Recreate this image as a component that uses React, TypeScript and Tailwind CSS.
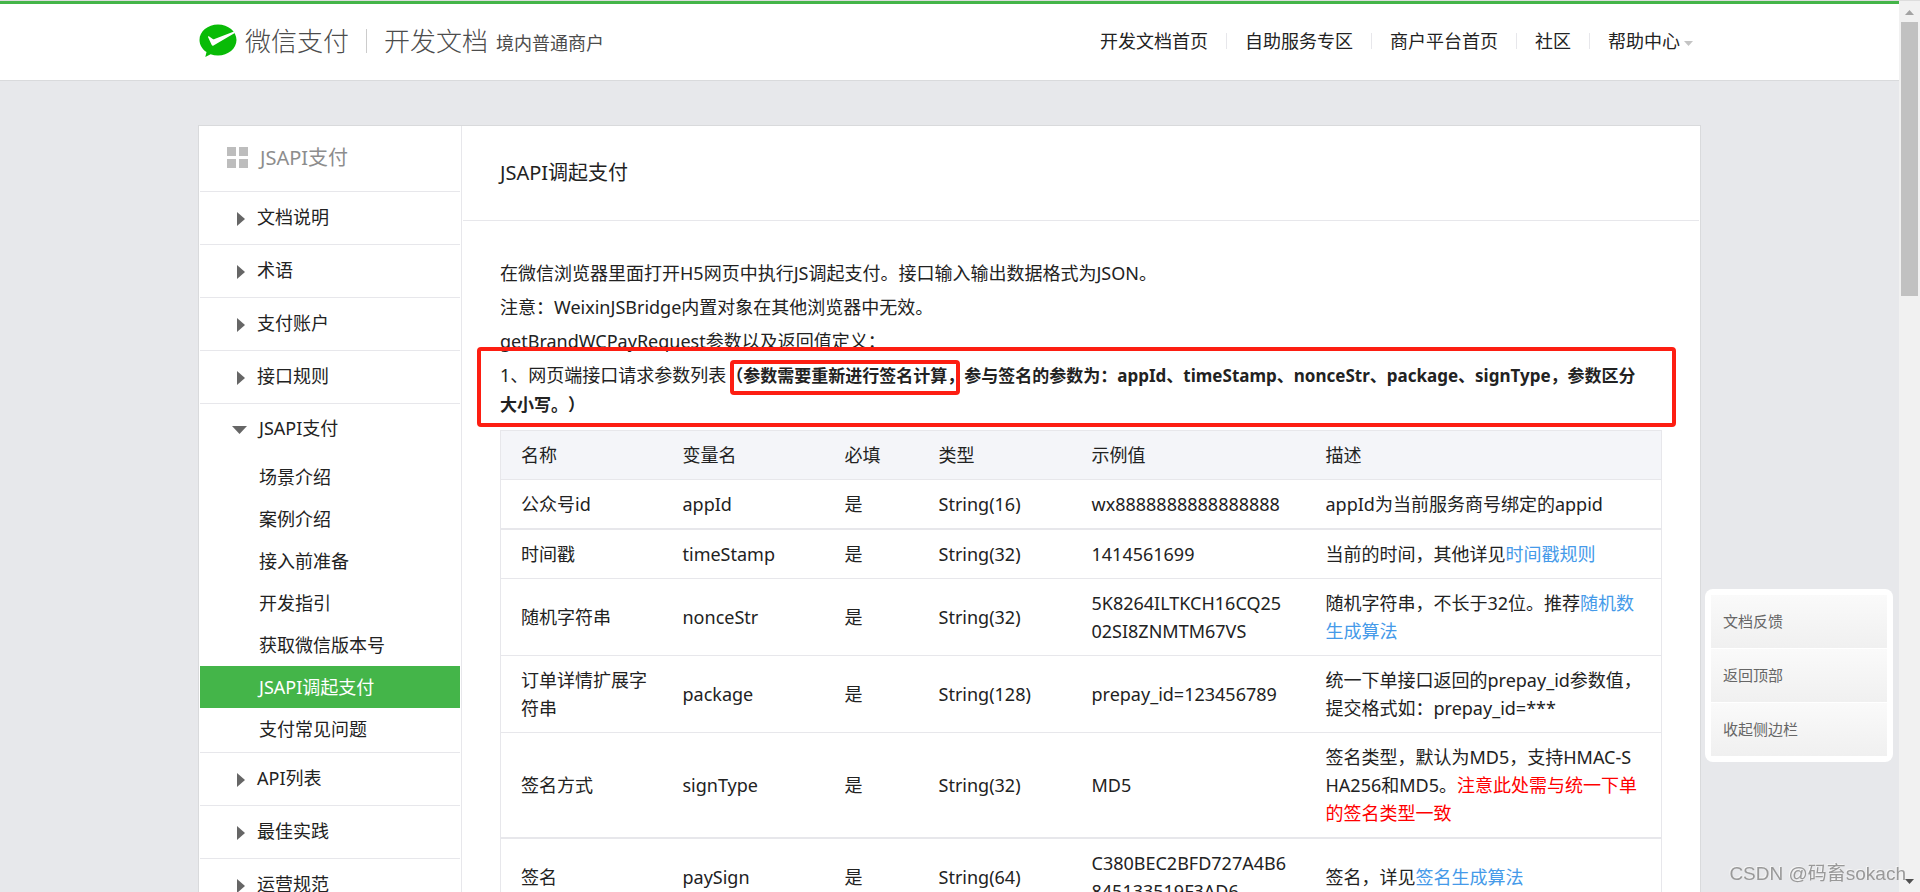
import type { ReactNode } from "react";
import clsx from "clsx";

const NAV = ["开发文档首页", "自助服务专区", "商户平台首页", "社区"];

const CHILDREN = [
  "场景介绍",
  "案例介绍",
  "接入前准备",
  "开发指引",
  "获取微信版本号",
  "JSAPI调起支付",
  "支付常见问题",
];

const ACTIVE = "JSAPI调起支付";

type Param = {
  label: string;
  name: string;
  type: string;
  example: string;
  desc: ReactNode;
  thick?: boolean;
};

const PARAMS: Param[] = [
  {
    label: "公众号id",
    name: "appId",
    type: "String(16)",
    example: "wx8888888888888888",
    desc: "appId为当前服务商号绑定的appid",
    thick: true,
  },
  {
    label: "时间戳",
    name: "timeStamp",
    type: "String(32)",
    example: "1414561699",
    desc: (
      <>
        当前的时间，其他详见<DocLink>时间戳规则</DocLink>
      </>
    ),
  },
  {
    label: "随机字符串",
    name: "nonceStr",
    type: "String(32)",
    example: "5K8264ILTKCH16CQ2502SI8ZNMTM67VS",
    desc: (
      <>
        随机字符串，不长于32位。推荐<DocLink>随机数生成算法</DocLink>
      </>
    ),
  },
  {
    label: "订单详情扩展字符串",
    name: "package",
    type: "String(128)",
    example: "prepay_id=123456789",
    desc: "统一下单接口返回的prepay_id参数值，提交格式如：prepay_id=***",
  },
  {
    label: "签名方式",
    name: "signType",
    type: "String(32)",
    example: "MD5",
    desc: (
      <>
        签名类型，默认为MD5，支持HMAC-SHA256和MD5。
        <span className="text-[#ff0000]">注意此处需与统一下单的签名类型一致</span>
      </>
    ),
    thick: true,
  },
  {
    label: "签名",
    name: "paySign",
    type: "String(64)",
    example: "C380BEC2BFD727A4B6845133519F3AD6",
    desc: (
      <>
        签名，详见<DocLink>签名生成算法</DocLink>
      </>
    ),
  },
];

function DocLink({ children }: { children: ReactNode }) {
  return (
    <a href="#" className="text-[#459ae9]">
      {children}
    </a>
  );
}

function Logo() {
  return (
    <svg width="38" height="34" viewBox="0 0 38 34" aria-hidden="true">
      <path
        d="M19 0.5C8.8 0.5 0.5 7.4 0.5 16c0 5 2.8 9.3 7 12.1L6.3 33l5.3-2.7c2.3 0.8 4.8 1.2 7.4 1.2 10.2 0 18.5-7 18.5-15.5S29.2 0.5 19 0.5Z"
        fill="#09bb07"
      />
      <path
        d="M14.5 21.5c-0.8 0.4-1.5 0.1-1.9-0.7L9 13c-0.2-0.6 0.3-1 0.9-0.7l3.9 2.7c0.5 0.3 1.1 0.4 1.7 0.1L35 7.6l0.8 1.5Z"
        fill="#fff"
      />
    </svg>
  );
}

function Header() {
  return (
    <header className="border-t border-b border-t-[#dddddd] border-b-[#d9dadc] bg-white">
      <div className="border-t-3 border-[#44b549]">
        <div className="mx-auto flex h-[76px] max-w-[1503px] items-center justify-between pr-2 pb-0.5 pl-px">
          <a href="#" className="flex items-center whitespace-nowrap text-[#4c4c4c]">
            <Logo />
            <span className="ml-2 text-[26px] font-light">微信支付</span>
            <span className="mx-[17px] h-6 w-px bg-[#cccccc]" />
            <span className="text-[26px] font-light">开发文档</span>
            <span className="mt-1 ml-2 text-lg">境内普通商户</span>
          </a>
          <nav className="flex items-center text-lg">
            {NAV.map((item) => (
              <div key={item} className="flex items-center">
                <a href="#">{item}</a>
                <span className="mx-[18px] h-4 w-px bg-[#e7e7eb]" />
              </div>
            ))}
            <a href="#" className="flex items-center gap-1">
              帮助中心
              <svg className="mt-1" width="9" height="5" viewBox="0 0 9 5" aria-hidden="true">
                <path d="M0 0h9L4.5 5Z" fill="#c4c4c4" />
              </svg>
            </a>
          </nav>
        </div>
      </div>
    </header>
  );
}

function MenuItem({ children }: { children: ReactNode }) {
  return (
    <button className="flex h-[53px] w-full items-center border-b border-[#e7e7eb] pb-0.5 pl-[37px] text-left">
      <svg className="mt-1" width="8" height="14" viewBox="0 0 8 14" aria-hidden="true">
        <path d="M0 0l8 7-8 7Z" fill="#666" />
      </svg>
      <span className="ml-3">{children}</span>
    </button>
  );
}

function Sidebar() {
  return (
    <aside className="w-[263px] shrink-0 border-r border-[#e7e7eb] px-px text-lg">
      <h2 className="flex h-[66px] items-center gap-3 border-b border-[#e7e7eb] pb-0.5 pl-[27px] text-xl text-[#8d8d8d]">
        <svg width="21" height="21" viewBox="0 0 21 21" fill="#bdbdbd" aria-hidden="true">
          <path d="M0 0h9v9H0ZM12 0h9v9h-9ZM0 12h9v9H0ZM12 12h9v9h-9Z" />
        </svg>
        JSAPI支付
      </h2>
      <MenuItem>文档说明</MenuItem>
      <MenuItem>术语</MenuItem>
      <MenuItem>支付账户</MenuItem>
      <MenuItem>接口规则</MenuItem>
      <div className="border-b border-[#e7e7eb] pb-0.5">
        <button className="mb-1 flex h-12 w-full items-center pl-8 text-left">
          <svg className="mt-1" width="15" height="8" viewBox="0 0 15 8" aria-hidden="true">
            <path d="M0 0h15L7.5 8Z" fill="#666" />
          </svg>
          <span className="ml-3">JSAPI支付</span>
        </button>
        {CHILDREN.map((item) => (
          <a
            key={item}
            href="#"
            className={clsx("flex h-[42px] items-center pl-[59px]", item === ACTIVE && "bg-[#44b549] text-white")}
          >
            {item}
          </a>
        ))}
      </div>
      <MenuItem>API列表</MenuItem>
      <MenuItem>最佳实践</MenuItem>
      <MenuItem>运营规范</MenuItem>
    </aside>
  );
}

function ParamTable() {
  return (
    <table className="w-full table-fixed border border-[#e7e7eb] text-left text-lg leading-7">
      <thead>
        <tr className="border-b border-[#e7e7eb] bg-[#f4f5f9]">
          <th className="w-[162px] py-2.5 pl-5 font-normal">名称</th>
          <th className="w-[162px] py-2.5 pl-5 font-normal">变量名</th>
          <th className="w-[94px] py-2.5 pl-5 font-normal">必填</th>
          <th className="w-[153px] py-2.5 pl-5 font-normal">类型</th>
          <th className="w-[234px] py-2.5 pl-5 font-normal">示例值</th>
          <th className="py-2.5 pl-5 font-normal">描述</th>
        </tr>
      </thead>
      <tbody>
        {PARAMS.map((p) => (
          <tr key={p.name} className={clsx("border-[#e7e7eb]", p.thick ? "border-b-2" : "border-b")}>
            <td className="py-2.5 pr-3.5 pl-5">{p.label}</td>
            <td className="py-2.5 pl-5">{p.name}</td>
            <td className="py-2.5 pl-5">是</td>
            <td className="py-2.5 pl-5">{p.type}</td>
            <td className="py-2.5 pr-4 pl-5 break-all">{p.example}</td>
            <td className="py-2.5 pr-[18px] pl-5 break-all">{p.desc}</td>
          </tr>
        ))}
      </tbody>
    </table>
  );
}

function Article() {
  return (
    <article className="min-w-0 flex-1">
      <h1 className="mx-px flex h-[95px] items-center border-b border-[#e7e7eb] pl-[37px] text-xl">
        JSAPI调起支付
      </h1>
      <div className="px-[38px] pt-[38px]">
        <div className="flex flex-col gap-1.5 text-lg leading-7">
          <p>在微信浏览器里面打开H5网页中执行JS调起支付。接口输入输出数据格式为JSON。</p>
          <p>注意：WeixinJSBridge内置对象在其他浏览器中无效。</p>
          <p>getBrandWCPayRequest参数以及返回值定义：</p>
          <div className="relative">
            <p className="pr-5 [text-spacing-trim:space-all]">
              1、网页端接口请求参数列表
              <strong className="text-[17px]">
                <span className="relative">
                  （参数需要重新进行签名计算，
                  <span className="absolute inset-x-1 -top-1 -bottom-2 rounded-sm border-4 border-[#fd1e12]" />
                </span>
                参与签名的参数为：appId、timeStamp、nonceStr、package、signType，参数区分大小写。）
              </strong>
            </p>
            <span className="absolute -top-3.5 -right-3.5 -bottom-2 -left-[23px] rounded-sm border-4 border-[#fd1e12]" />
          </div>
        </div>
        <div className="mt-[11px]">
          <ParamTable />
        </div>
      </div>
    </article>
  );
}

function SideTools() {
  return (
    <div className="fixed right-[27px] bottom-[130px] flex w-[188px] flex-col gap-px rounded-lg bg-white p-1.5 text-[15px] text-[#666666]">
      {["文档反馈", "返回顶部", "收起侧边栏"].map((item) => (
        <button key={item} className="h-[53px] bg-linear-to-b from-[#fafafa] to-[#f0f0f0] pl-3 text-left">
          {item}
        </button>
      ))}
    </div>
  );
}

function Scrollbar() {
  return (
    <div className="flex w-[21px] shrink-0 flex-col items-center justify-between border-t border-[#dddddd] bg-[#f1f1f1]">
      <div className="flex flex-col items-center">
        <svg width="17" height="21" viewBox="0 0 17 21" aria-hidden="true">
          <path d="M4 14h9L8.5 9Z" fill="#a3a3a3" />
        </svg>
        <div className="h-[274px] w-[17px] bg-[#c1c1c1]" />
      </div>
      <svg width="17" height="21" viewBox="0 0 17 21" aria-hidden="true">
        <path d="M4 8h9L8.5 13Z" fill="#505050" />
      </svg>
    </div>
  );
}

export default function App() {
  return (
    <div className="flex h-screen overflow-hidden bg-[#e7e8eb] font-['Noto_Sans','Noto_Sans_CJK_SC',sans-serif] text-[#222222]">
      <div className="min-w-0 flex-1 overflow-hidden">
        <Header />
        <main className="mx-auto mt-11 flex max-w-[1503px] border border-[#d9dadc] bg-white">
          <Sidebar />
          <Article />
        </main>
      </div>
      <SideTools />
      <Scrollbar />
      <div className="fixed right-3.5 bottom-1 font-['Liberation_Sans','Noto_Sans_CJK_SC',sans-serif] text-[19px] text-[#999999] [text-shadow:-1px_-1px_0_#f4f4f4]">
        CSDN @码畜sokach
      </div>
    </div>
  );
}
